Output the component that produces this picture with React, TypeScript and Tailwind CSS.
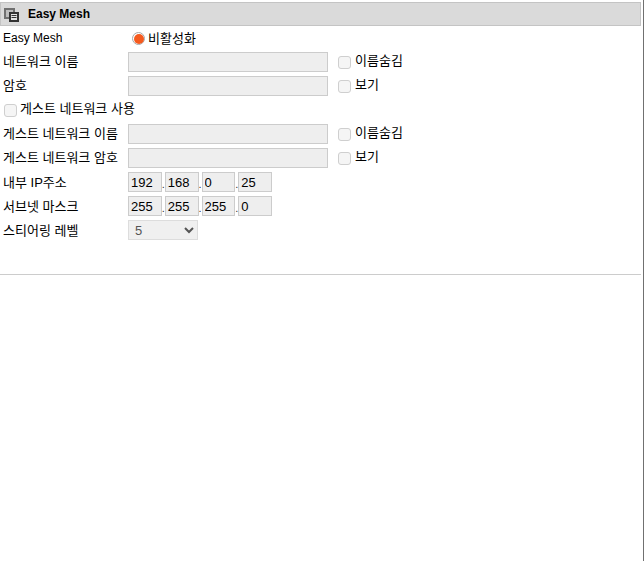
const fontStack = "font-['Liberation_Sans','Noto_Sans_CJK_KR',sans-serif]";

function Check({ label, className = "" }: { label: string; className?: string }) {
  return (
    <label className={`flex items-center text-[13px] text-black ${className}`}>
      <input
        type="checkbox"
        disabled
        className="m-0 h-[13px] w-[13px] appearance-none rounded-[3px] border border-[#cfcfcf] bg-[#f5f5f5]"
      />
      <span className="ml-[4px] -mt-[2px]">{label}</span>
    </label>
  );
}

function TextRow({ label, check }: { label: string; check: string }) {
  return (
    <div className="flex h-[24px] items-center">
      <span className="w-[128px] pl-[3px] text-[13px] text-black">{label}</span>
      <input
        disabled
        className="box-border h-[20px] w-[200px] border border-[#cccccc] bg-[#eeeeee]"
      />
      <Check label={check} className="ml-[10px]" />
    </div>
  );
}

function IpRow({ label, parts }: { label: string; parts: string[] }) {
  return (
    <div className="flex h-[24px] items-center">
      <span className="w-[128px] pl-[3px] pt-[2px] text-[13px] text-black">{label}</span>
      {parts.map((p, i) => (
        <div key={i} className="flex items-center">
          {i > 0 && <span className="w-[3px] pt-[5px] text-[11px] leading-none text-[#333333]">.</span>}
          <input
            disabled
            value={p}
            className="box-border h-[20px] w-[33.75px] border border-[#cccccc] bg-[#eeeeee] px-[2px] text-[13px] text-black opacity-100"
          />
        </div>
      ))}
    </div>
  );
}

export default function App() {
  return (
    <div className={`h-[561px] w-[644px] overflow-hidden border-r border-[#707070] bg-white ${fontStack}`}>
      <div className="mt-[2px] flex h-[24px] w-[641px] items-center border border-[#c4c4c4] bg-[#dadada]">
        <svg width="15" height="14" viewBox="0 0 15 14" className="ml-[3px] mt-[1px]">
          <rect x="1" y="1" width="9" height="9" fill="#bdbdbd" stroke="#707070" strokeWidth="2" />
          <rect x="6" y="5" width="8" height="8" fill="#e4e4e4" stroke="#333333" strokeWidth="2" />
          <path d="M7.5 7.5h5M7.5 9.5h5" stroke="#333333" />
        </svg>
        <span className="ml-[9px] text-[12px] font-bold text-black">Easy Mesh</span>
      </div>

      <div className="flex h-[24px] items-center">
        <span className="w-[129px] pl-[3px] text-[12px] text-black">Easy Mesh</span>
        <span className="ml-[3px] mt-[1px] flex h-[13px] w-[13px] items-center justify-center rounded-full border border-[#a8a8a8] bg-white">
          <span className="h-[10px] w-[10px] rounded-full bg-[#f55a1e]" />
        </span>
        <span className="ml-[3px] mt-[2px] text-[13px] text-black">비활성화</span>
      </div>

      <div>
        <TextRow label="네트워크 이름" check="이름숨김" />
        <TextRow label="암호" check="보기" />
        <div className="flex h-[24px] items-center pl-[4px]">
          <Check label="게스트 네트워크 사용" className="[&>span]:ml-[3px]" />
        </div>
        <TextRow label="게스트 네트워크 이름" check="이름숨김" />
        <TextRow label="게스트 네트워크 암호" check="보기" />
        <IpRow label="내부 IP주소" parts={["192", "168", "0", "25"]} />
        <IpRow label="서브넷 마스크" parts={["255", "255", "255", "0"]} />
        <div className="flex h-[24px] items-center">
          <span className="w-[128px] pl-[3px] pt-[2px] text-[13px] text-black">스티어링 레벨</span>
          <select
            defaultValue="5"
            className="box-border h-[20px] w-[70px] border border-[#dddddd] bg-[#f0f0f0] pl-[2px] text-[13px] text-[#555555] opacity-100"
          >
            <option value="5">5</option>
          </select>
        </div>
      </div>

      <div className="mt-[32px] h-px w-[641px] bg-[#cccccc]" />
    </div>
  );
}
